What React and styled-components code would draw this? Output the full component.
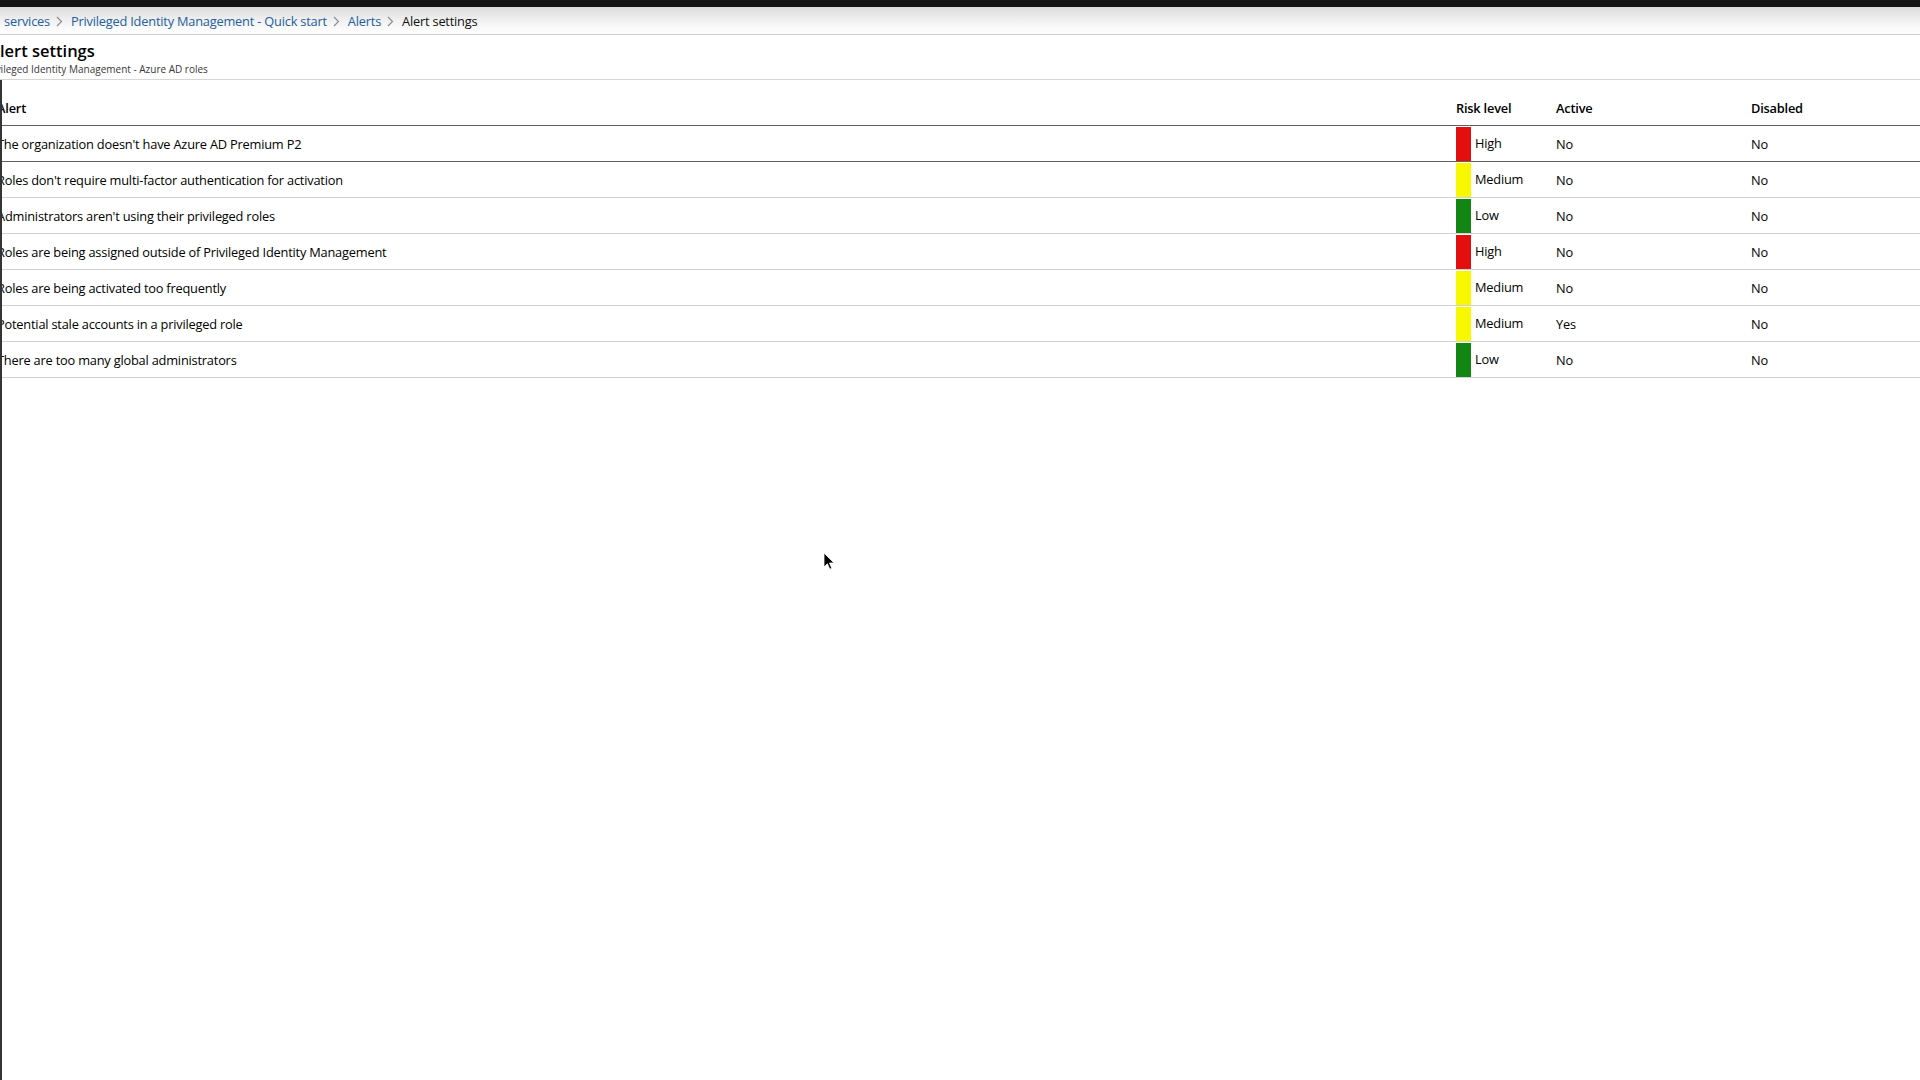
import styled, { createGlobalStyle } from 'styled-components';

const alerts = [
  { name: "The organization doesn't have Azure AD Premium P2", risk: 'High', active: 'No', disabled: 'No' },
  { name: "Roles don't require multi-factor authentication for activation", risk: 'Medium', active: 'No', disabled: 'No' },
  { name: "Administrators aren't using their privileged roles", risk: 'Low', active: 'No', disabled: 'No' },
  { name: 'Roles are being assigned outside of Privileged Identity Management', risk: 'High', active: 'No', disabled: 'No' },
  { name: 'Roles are being activated too frequently', risk: 'Medium', active: 'No', disabled: 'No' },
  { name: 'Potential stale accounts in a privileged role', risk: 'Medium', active: 'Yes', disabled: 'No' },
  { name: 'There are too many global administrators', risk: 'Low', active: 'No', disabled: 'No' },
];

const riskColors = {
  High: '#e30f0f',
  Medium: '#f7f700',
  Low: '#128612',
};

const Chevron = () => (
  <ChevronIcon width="7" height="11" viewBox="0 0 7 11">
    <path d="M1 1l4.5 4.5L1 10" fill="none" stroke="#8a8a8a" strokeWidth="1.1" />
  </ChevronIcon>
);

const App = () => {
  const crumbs = ['services', 'Privileged Identity Management - Quick start', 'Alerts'];
  return (
    <>
      <GlobalStyle />
      <Page>
        <TopBar />
        <Breadcrumb>
          {crumbs.map((c) => (
            <CrumbGroup key={c}>
              <CrumbLink>{c}</CrumbLink>
              <Chevron />
            </CrumbGroup>
          ))}
          <CrumbCurrent>Alert settings</CrumbCurrent>
        </Breadcrumb>
        <BladeHeader>
          <Title>Alert settings</Title>
          <Subtitle>Privileged Identity Management - Azure AD roles</Subtitle>
        </BladeHeader>
        <Content>
          <Grid>
            <HeadCell $first>Alert</HeadCell>
            <HeadCell>Risk level</HeadCell>
            <HeadCell>Active</HeadCell>
            <HeadCell>Disabled</HeadCell>
            {alerts.map((a, i) => (
              <Row key={a.name} $strong={i === 0}>
                <Cell $first>{a.name}</Cell>
                <Cell>
                  <RiskBar $color={riskColors[a.risk]} />
                  <RiskText>{a.risk}</RiskText>
                </Cell>
                <Cell>{a.active}</Cell>
                <Cell>{a.disabled}</Cell>
              </Row>
            ))}
          </Grid>
        </Content>
        <Cursor width="12" height="18" viewBox="0 0 12 18">
          <path d="M1 1v14l3.4-3.2 2.4 5.4 2-0.9-2.3-5.3H11z" fill="#000" stroke="#fff" strokeWidth="0.8" />
        </Cursor>
      </Page>
    </>
  );
};

const GlobalStyle = createGlobalStyle`
  html, body {
    margin: 0;
    padding: 0;
    height: 100%;
    overflow: hidden;
    background: #ffffff;
  }
  #root {
    height: 100%;
  }
  * {
    box-sizing: border-box;
  }
`;

const Page = styled.div`
  position: relative;
  width: 1920px;
  height: 1080px;
  overflow: hidden;
  display: flex;
  flex-direction: column;
  background: #ffffff;
  font-family: 'Open Sans', 'Noto Sans', sans-serif;
  color: #111;
`;

const TopBar = styled.div`
  height: 7px;
  flex-shrink: 0;
  background: #151515;
`;

const Breadcrumb = styled.div`
  height: 28px;
  flex-shrink: 0;
  display: flex;
  align-items: center;
  padding: 1px 0 0 4px;
  background: linear-gradient(#dcdcdc 0%, #efefef 45%, #fbfbfb 80%, #fdfdfd 100%);
  border-bottom: 1px solid #cfcfcf;
  font-size: 12.8px;
  letter-spacing: -0.2px;
  white-space: nowrap;
`;

const CrumbGroup = styled.div`
  display: flex;
  align-items: center;
`;

const CrumbLink = styled.span`
  color: #24609c;
  cursor: pointer;
`;

const CrumbCurrent = styled.span`
  color: #111;
`;

const ChevronIcon = styled.svg`
  margin: 0 8px 0 6px;
  display: block;
`;

const BladeHeader = styled.div`
  height: 45px;
  flex-shrink: 0;
  display: flex;
  flex-direction: column;
  padding-top: 5px;
  border-bottom: 1px solid #d6d6d6;
  white-space: nowrap;
`;

const Title = styled.div`
  margin-left: -11px;
  font-size: 16.5px;
  font-weight: 600;
  line-height: 22px;
  color: #000;
`;

const Subtitle = styled.div`
  margin-left: -17px;
  font-size: 10px;
  line-height: 14px;
  color: #383838;
`;

const Content = styled.div`
  flex: 1;
  border-left: 2px solid #353535;
  overflow: hidden;
`;

const Grid = styled.div`
  display: grid;
  grid-template-columns: 1fr 100px 195px 169px;
`;

const HeadCell = styled.div`
  height: 46px;
  display: flex;
  align-items: flex-end;
  padding-bottom: 8px;
  margin-left: ${(p) => (p.$first ? '-5px' : '0')};
  border-bottom: 1px solid #5f5f5f;
  font-size: 12.8px;
  letter-spacing: -0.2px;
  font-weight: 600;
  color: #000;
  white-space: nowrap;
`;

const Row = styled.div`
  display: contents;
  & > div {
    border-bottom: 1px solid ${(p) => (p.$strong ? '#5f5f5f' : '#d2d2d2')};
  }
`;

const Cell = styled.div`
  height: 36px;
  display: flex;
  align-items: center;
  padding-top: 1px;
  margin-left: ${(p) => (p.$first ? '-5px' : '0')};
  font-size: 12.8px;
  letter-spacing: -0.2px;
  color: #000;
  white-space: nowrap;
`;

const RiskBar = styled.span`
  align-self: stretch;
  width: 15px;
  background: ${(p) => p.$color};
`;

const RiskText = styled.span`
  margin-left: 4px;
  margin-bottom: 3px;
`;

const Cursor = styled.svg`
  position: absolute;
  left: 823px;
  top: 552px;
`;

export default App;
